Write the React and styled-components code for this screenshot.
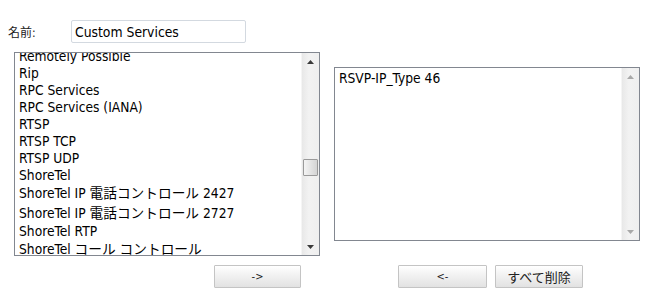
import React from 'react';
import styled, { createGlobalStyle } from 'styled-components';

const GlobalStyle = createGlobalStyle`
  html, body {
    margin: 0;
    padding: 0;
    background: #ffffff;
  }
  body {
    font-family: "DejaVu Sans Condensed", "DejaVu Sans", "Noto Sans CJK JP", sans-serif;
    color: #000;
  }
`;

const Page = styled.div`
  width: 654px;
  height: 301px;
  overflow: hidden;
  background: #fff;
`;

const NameRow = styled.div`
  display: flex;
  align-items: center;
  padding: 20px 0 0 8px;
  height: 23px;
`;

const Label = styled.label`
  width: 63px;
  font-size: 12px;
  font-family: "DejaVu Sans Condensed", "Noto Sans CJK JP", sans-serif;
  color: #222;
`;

const NameInput = styled.input`
  box-sizing: border-box;
  width: 175px;
  height: 23px;
  border: 1px solid #d3d9e0;
  border-radius: 2px;
  padding: 0 3px;
  font-family: "DejaVu Sans Condensed", "Noto Sans CJK JP", sans-serif;
  font-size: 13.8px;
  color: #000;
  outline: none;
`;

const Columns = styled.div`
  display: grid;
  grid-template-columns: 306px 306px;
  column-gap: 14px;
  padding: 9px 0 0 14px;
  align-items: start;
`;

const Column = styled.div`
  display: flex;
  flex-direction: column;
`;

const ListBox = styled.div`
  box-sizing: border-box;
  display: flex;
  width: 306px;
  height: ${p => p.$height}px;
  margin-top: ${p => p.$offset || 0}px;
  border: 1px solid #828790;
  background: #fff;
`;

const Items = styled.div`
  flex: 1;
  overflow: hidden;
  padding-left: 4px;
`;

const ItemsInner = styled.ul`
  list-style: none;
  margin: ${p => p.$shift || 0}px 0 0 0;
  padding: 0;
`;

const Item = styled.li`
  font-size: 13.7px;
  line-height: ${p => (p.$cjk ? '19.5px' : '17px')};
  white-space: nowrap;
  color: #000;
`;

const ScrollBar = styled.div`
  width: 17px;
  display: flex;
  flex-direction: column;
  align-items: center;
  background: linear-gradient(to right, #e8e8e8, #f2f2f2 40%, #efefef);
  border-left: 1px solid #f5f5f5;
`;

const Arrow = styled.div`
  height: 17px;
  width: 100%;
  display: flex;
  align-items: center;
  justify-content: center;
`;

const Track = styled.div`
  flex: 1;
  width: 100%;
  position: relative;
`;

const Thumb = styled.div`
  position: absolute;
  left: 1px;
  top: ${p => p.$top}px;
  width: 13px;
  height: 15px;
  border: 1px solid #9a9a9a;
  border-radius: 1px;
  background: linear-gradient(to right, #f4f4f4, #e4e4e4 50%, #d4d4d4);
`;

const ButtonRow = styled.div`
  display: flex;
  gap: 8px;
  margin-top: ${p => p.$top}px;
  justify-content: ${p => (p.$end ? 'flex-end' : 'flex-start')};
  padding: ${p => p.$pad};
`;

const Button = styled.button`
  box-sizing: border-box;
  width: ${p => p.$w}px;
  height: 23px;
  border: 1px solid #c4c4c4;
  border-radius: 1px;
  background: linear-gradient(to bottom, #ffffff, #f0f0f0 50%, #e2e2e2);
  font-family: "DejaVu Sans Condensed", "Noto Sans CJK JP", sans-serif;
  font-size: ${p => p.$fs || 11}px;
  color: #222;
  padding: 0;
  cursor: pointer;
`;

const Tri = ({ up, color }) => (
  <svg width="7" height="4" viewBox="0 0 7 4">
    {up ? (
      <path d="M3.5 0 L7 4 L0 4 Z" fill={color} />
    ) : (
      <path d="M0 0 L7 0 L3.5 4 Z" fill={color} />
    )}
  </svg>
);

const Scroll = ({ thumbTop, disabled }) => {
  const c = disabled ? '#a8a8a8' : '#3a3a3a';
  return (
    <ScrollBar>
      <Arrow>
        <Tri up color={c} />
      </Arrow>
      <Track>{thumbTop != null && <Thumb $top={thumbTop} />}</Track>
      <Arrow>
        <Tri color={c} />
      </Arrow>
    </ScrollBar>
  );
};

const services = [
  ['Remotely Possible'],
  ['Rip'],
  ['RPC Services'],
  ['RPC Services (IANA)'],
  ['RTSP'],
  ['RTSP TCP'],
  ['RTSP UDP'],
  ['ShoreTel'],
  ['ShoreTel IP 電話コントロール 2427', true],
  ['ShoreTel IP 電話コントロール 2727', true],
  ['ShoreTel RTP'],
  ['ShoreTel コール コントロール', true],
];

const App = () => (
  <Page>
    <GlobalStyle />
    <NameRow>
      <Label>名前:</Label>
      <NameInput defaultValue="Custom Services" />
    </NameRow>
    <Columns>
      <Column>
        <ListBox $height={204}>
          <Items>
            <ItemsInner $shift={-5}>
              {services.map(([name, cjk]) => (
                <Item key={name} $cjk={cjk}>
                  {name}
                </Item>
              ))}
            </ItemsInner>
          </Items>
          <Scroll thumbTop={89} />
        </ListBox>
        <ButtonRow $top={9} $end $pad="0 19px 0 0">
          <Button $w={87}>-&gt;</Button>
        </ButtonRow>
      </Column>
      <Column>
        <ListBox $height={174} $offset={15}>
          <Items>
            <ItemsInner $shift={2}>
              <Item>RSVP-IP_Type 46</Item>
            </ItemsInner>
          </Items>
          <Scroll disabled />
        </ListBox>
        <ButtonRow $top={24} $pad="0 0 0 64px">
          <Button $w={89}>&lt;-</Button>
          <Button $w={88} $fs={13}>すべて削除</Button>
        </ButtonRow>
      </Column>
    </Columns>
  </Page>
);

export default App;
